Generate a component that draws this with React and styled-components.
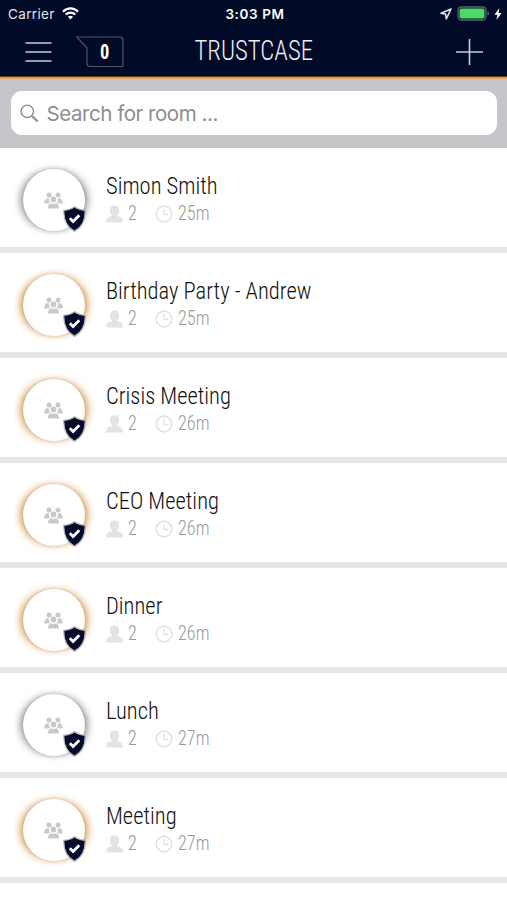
import React from "react";
import styled, { createGlobalStyle } from "styled-components";

const GlobalStyle = createGlobalStyle`
  * {
    box-sizing: border-box;
  }
  body {
    margin: 0;
    background: #fff;
  }
`;

const Screen = styled.div`
  width: 507px;
  height: 900px;
  overflow: hidden;
  background: #fff;
  font-family: Roboto, sans-serif;
`;
const Header = styled.header`
  height: 79px;
  background: #010a26;
  border-bottom: 2px solid #d9a050;
  box-shadow: inset 0 -1px 0 #5a3a22;
  color: #fff;
`;
const StatusBar = styled.div`
  height: 27px;
  padding: 0 5px 0 8px;
  display: grid;
  grid-template-columns: 1fr auto 1fr;
  align-items: center;
  font-family: Inter, sans-serif;
  font-size: 13.5px;
`;
const Carrier = styled.div`
  display: flex;
  align-items: center;
  gap: 7px;
  color: #e2e5ee;
  letter-spacing: 0.35px;
`;
const Time = styled.div`
  font-weight: 600;
  letter-spacing: 0.6px;
`;
const StatusIcons = styled.div`
  display: flex;
  justify-content: flex-end;
  align-items: center;
  gap: 4px;
`;
const NavBar = styled.div`
  height: 50px;
  padding: 0 24px 0 25px;
  display: grid;
  grid-template-columns: 1fr auto 1fr;
  align-items: center;
`;
const NavLeft = styled.div`
  display: flex;
  align-items: center;
  gap: 24px;
`;
const NavRight = styled.div`
  display: flex;
  justify-content: flex-end;
`;
const Condensed = styled.span`
  display: inline-block;
  white-space: nowrap;
  font-stretch: 75%;
  font-weight: 300;
  transform: scaleX(0.92);
  transform-origin: left;
`;
const Title = styled(Condensed)`
  font-size: 27px;
  line-height: 44px;
  padding-bottom: 2px;
  color: #eef0f5;
  transform: scaleX(0.915);
  transform-origin: center;
`;
const Counter = styled.div`
  display: grid;
  width: 49px;
  height: 32px;

  > * {
    grid-area: 1 / 1;
  }
`;
const CounterValue = styled(Condensed)`
  font-size: 20px;
  font-weight: 700;
  line-height: 32px;
  padding-left: 9px;
  text-align: center;
  transform-origin: center;
`;
const SearchBar = styled.div`
  height: 69px;
  padding: 12px 10px 13px 11px;
  background: #c6c6ca;
`;
const SearchField = styled.div`
  height: 44px;
  padding-left: 9px;
  display: flex;
  align-items: center;
  gap: 7.5px;
  background: #fff;
  border-radius: 11px;
`;
const SearchInput = styled.input`
  flex: 1;
  border: 0;
  padding: 0;
  outline: 0;
  background: none;
  font: 20.5px Inter, sans-serif;
  letter-spacing: -0.45px;

  &::placeholder {
    color: #8e8e93;
    opacity: 1;
  }
`;
const Room = styled.div`
  height: 105px;
  padding: 21px 0 0 22.5px;
  display: flex;
  gap: 21.5px;
  border-bottom: 6px solid #e7e7e7;
`;
const Avatar = styled.div`
  position: relative;
  width: 62px;
  height: 62px;
  display: flex;
  align-items: center;
  justify-content: center;
  border-radius: 50%;
  background: #fff;
  box-shadow:
    -5px 0 9px -3px ${(props) => (props.$gold ? "#c98a3c" : "#808080")},
    5px 0 9px -3px ${(props) => (props.$gold ? "#c98a3c" : "#808080")},
    0 0 3px ${(props) => (props.$gold ? "#f0e6d6" : "#e2e2e2")};
`;
const Badge = styled.svg`
  position: absolute;
  right: -1px;
  bottom: -1px;
`;
const Details = styled.div`
  padding-top: 2px;
`;
const RoomName = styled(Condensed)`
  display: block;
  font-size: 24.5px;
  line-height: 30px;
  color: #111;
`;
const Meta = styled.div`
  height: 26px;
  display: flex;
  align-items: center;
  color: #999;
`;
const MetaText = styled(Condensed)`
  font-size: 19.5px;
  line-height: 26px;
  margin-left: 4.5px;
  margin-right: ${(props) => props.$space || 0}px;
  transform: scaleX(0.93);
`;

const WifiIcon = () => (
  <svg width="17" height="13" viewBox="0 0 17 13" fill="none" stroke="#fff" strokeWidth="2.1">
    <path d="M1 4.7C5.2.3 11.8.3 16 4.7" />
    <path d="M3.7 7.6c2.7-2.7 6.9-2.7 9.6 0" />
    <path d="M8.5 12.5 5.9 9.8c1.5-1.4 3.7-1.4 5.2 0z" fill="#fff" stroke="none" />
  </svg>
);
const LocationIcon = () => (
  <svg width="13" height="12" viewBox="0 0 13 12" fill="none" stroke="#dfe2ea" strokeWidth="1.6" strokeLinejoin="round">
    <path d="M11 1 1 5.300l4.600.8.7 4.700z" />
  </svg>
);
const BatteryIcon = () => (
  <svg width="33" height="15" viewBox="0 0 33 15">
    <rect x="1" y="1" width="28" height="13" rx="3.5" fill="none" stroke="#5d6472" strokeWidth="1.3" />
    <rect x="2.5" y="2.5" width="25" height="10" rx="1.8" fill="#4cd964" />
    <path d="M30.5 5.3c2 .7 2 3.7 0 4.4z" fill="#5d6472" />
  </svg>
);
const BoltIcon = () => (
  <svg width="8" height="12" viewBox="0 0 8 12">
    <path d="M5.4 0 .4 6.8h3L2.4 12l5.2-7H4.5z" fill="#fff" />
  </svg>
);
const MenuIcon = () => (
  <svg width="27" height="22" viewBox="0 0 27 22" stroke="#c9ccd6" strokeWidth="1.7">
    <path d="M.5 2h26M.5 11h26M.5 20h26" />
  </svg>
);
const BubbleShape = () => (
  <svg width="49" height="32" viewBox="0 0 49 32" fill="none" stroke="#4e566c" strokeWidth="1.2">
    <path d="M.8 1H44a3 3 0 0 1 3 3v26.500H14a3 3 0 0 1-3-3V12z" />
  </svg>
);
const PlusIcon = () => (
  <svg width="27" height="26" viewBox="0 0 27 26" stroke="#c9ccd6" strokeWidth="1.6">
    <path d="M0 13h27M13.5 0v26" />
  </svg>
);
const SearchIcon = () => (
  <svg width="19" height="19" viewBox="0 0 19 19" fill="none" stroke="#8e8e93">
    <circle cx="7.3" cy="7.3" r="6.2" strokeWidth="1.4" />
    <path d="m12 12 5.7 5.5" strokeWidth="2.2" />
  </svg>
);
const GroupIcon = () => (
  <svg width="19" height="17" viewBox="0 0 19 17" fill="#c9c9c9">
    <circle cx="5" cy="2.9" r="2.5" />
    <circle cx="14" cy="2.9" r="2.5" />
    <path d="M.2 11.5C.2 8 1.5 6 5 6.200c-.4 1.800 0 3.300 1.200 4.300-1 .2-1.500.5-2 1z" />
    <path d="M18.800 11.500c0-3.500-1.300-5.500-4.800-5.300.4 1.800 0 3.300-1.200 4.300 1 .2 1.500.5 2 1z" />
    <circle cx="9.5" cy="7.5" r="2.9" />
    <path d="M4 16.500c0-3.300 1.300-5 3-5.300 1.600 1 3.400 1 5 0 1.700.3 3 2 3 5.300z" />
  </svg>
);
const PersonIcon = () => (
  <svg width="17" height="18" viewBox="0 0 17 18" fill="#e3e3e3">
    <rect x="4" y=".5" width="9" height="10" rx="4" />
    <path d="M6 9h5v2.300c4 .4 5.800 2 6 6.200H0c.2-4.200 2-5.800 6-6.200z" />
  </svg>
);
const ClockIcon = () => (
  <svg width="18" height="18" viewBox="0 0 18 18" fill="none" stroke="#e3e3e3">
    <circle cx="9" cy="9" r="7.8" strokeWidth="1.7" />
    <path d="M9 3.500V9.500h4.500" strokeWidth="1.300" />
  </svg>
);
const ShieldBadge = () => (
  <Badge width="23" height="26" viewBox="0 0 23 26">
    <path
      d="M11.5.8c3 2.200 6.500 3.200 10.700 3.500C22.500 13.500 19.500 21 11.500 25.400 3.500 21 .5 13.500.8 4.300 5 4 8.500 3 11.500.8z"
      fill="#050b2a"
      stroke="#b9b9b9"
      strokeWidth="1.2"
    />
    <path d="m6.800 12.300 3.300 3.200 6.200-6.300" fill="none" stroke="#fff" strokeWidth="2.700" />
  </Badge>
);

const rooms = [
  { name: "Simon Smith", members: 2, age: "25m" },
  { name: "Birthday Party - Andrew", members: 2, age: "25m", gold: true },
  { name: "Crisis Meeting", members: 2, age: "26m", gold: true },
  { name: "CEO Meeting", members: 2, age: "26m", gold: true },
  { name: "Dinner", members: 2, age: "26m", gold: true },
  { name: "Lunch", members: 2, age: "27m" },
  { name: "Meeting", members: 2, age: "27m", gold: true },
];

const App = () => {
  return (
    <Screen>
      <GlobalStyle />
      <Header>
        <StatusBar>
          <Carrier>
            Carrier
            <WifiIcon />
          </Carrier>
          <Time>3:03 PM</Time>
          <StatusIcons>
            <LocationIcon />
            <BatteryIcon />
            <BoltIcon />
          </StatusIcons>
        </StatusBar>
        <NavBar>
          <NavLeft>
            <MenuIcon />
            <Counter>
              <BubbleShape />
              <CounterValue>0</CounterValue>
            </Counter>
          </NavLeft>
          <Title>TRUSTCASE</Title>
          <NavRight>
            <PlusIcon />
          </NavRight>
        </NavBar>
      </Header>
      <SearchBar>
        <SearchField>
          <SearchIcon />
          <SearchInput placeholder="Search for room ..." />
        </SearchField>
      </SearchBar>
      {rooms.map((room) => (
        <Room key={room.name}>
          <Avatar $gold={room.gold}>
            <GroupIcon />
            <ShieldBadge />
          </Avatar>
          <Details>
            <RoomName>{room.name}</RoomName>
            <Meta>
              <PersonIcon />
              <MetaText $space={18.5}>{room.members}</MetaText>
              <ClockIcon />
              <MetaText>{room.age}</MetaText>
            </Meta>
          </Details>
        </Room>
      ))}
    </Screen>
  );
};

export default App;
